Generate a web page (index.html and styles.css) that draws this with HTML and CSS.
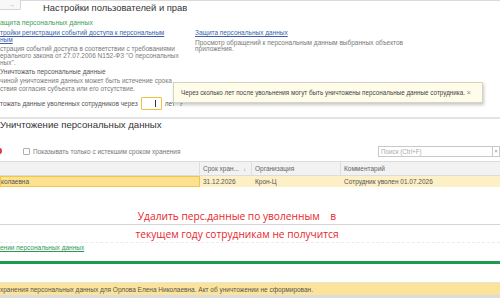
FILE: index.html
```html
<!DOCTYPE html>
<html lang="ru">
<head>
<meta charset="utf-8">
<link rel="stylesheet" href="styles.css">
</head>
<body>
<div class="page">
  <div class="topbar">
    <div class="navbtn"><span class="arrow">→</span></div>
    <div class="title">Настройки пользователей и прав</div>
  </div>

  <div class="group-title">ащита персональных данных</div>
  <div class="cols">
    <div class="col-left">
      <a class="link">тройки регистрации событий доступа к персональным<br>ным</a>
      <div class="desc">страция событий доступа в соответствии с требованиями<br>ерального закона от 27.07.2006 N152-ФЗ "О персональных<br>ных".</div>
    </div>
    <div class="col-right">
      <a class="link">Защита персональных данных</a>
      <div class="desc desc-right">Просмотр обращений к персональным данным выбранных объектов<br>приложения.</div>
    </div>
  </div>

  <div class="destroy">
    <div class="label-dark">Уничтожать персональные данные</div>
    <div class="desc desc-destroy">чиной уничтожения данных может быть истечение срока<br>ствия согласия субъекта или его отсутствие.</div>
    <div class="years-row">
      <span class="label-dark">тожать данные уволенных сотрудников через</span>
      <span class="years-input"><span class="caret"></span></span>
      <span class="label-dark">лет</span>
      <span class="help">?</span>
    </div>
  </div>

  <div class="tooltip">
    <span>Через сколько лет после увольнения могут быть уничтожены персональные данные сотрудника.</span>
    <span class="close">×</span>
  </div>

  <div class="separator"></div>

  <div class="section-title">Уничтожение персональных данных</div>

  <div class="toolbar">
    <span class="red-icon"></span>
    <span class="checkbox"></span>
    <span class="cb-label">Показывать только с истекшим сроком хранения</span>
    <span class="spacer"></span>
    <span class="search"><span class="search-text">Поиск (Ctrl+F)</span><span class="search-btn">×</span></span>
  </div>

  <div class="table">
    <div class="thead">
      <div class="c1"></div>
      <div class="c2"><span>Срок хран...</span><span class="sort">↓</span></div>
      <div class="c3">Организация</div>
      <div class="c4">Комментарий</div>
    </div>
    <div class="tbody">
      <div class="trow">
        <div class="c1 sel">колаевна</div>
        <div class="c2">31.12.2026</div>
        <div class="c3">Крон-Ц</div>
        <div class="c4">Сотрудник уволен 01.07.2026</div>
      </div>
    </div>
  </div>

  <div class="gap-row"></div>
  <div class="green-link-row"><a class="green-link">ении персональных данных</a></div>
  <div class="green-bar"></div>

  <div class="message">хранения персональных данных для Орлова Елена Николаевна. Акт об уничтожении не сформирован.</div>

  <div class="note">
    <div class="note-line">Удалить перс.данные по уволенным&nbsp;&nbsp;&nbsp; в</div>
    <div class="note-line">текущем году сотрудникам не получится</div>
  </div>
</div>
</body>
</html>
```

FILE: styles.css
```css
* { box-sizing: border-box; }
html, body { margin: 0; padding: 0; }
body {
  width: 500px;
  height: 300px;
  overflow: hidden;
  background: #fff;
  font-family: "Liberation Sans", Arial, sans-serif;
  color: #444;
}
.page {
  position: relative;
  width: 500px;
  height: 300px;
  border-top: 1px solid #dadada;
}
.topbar {
  display: flex;
  align-items: center;
  height: 13px;
}
.navbtn {
  width: 21px;
  height: 10px;
  align-self: flex-start;
  margin-top: -1px;
  border: 1px solid #d6d6d6;
  border-left: none;
  border-top: none;
  border-radius: 0 0 2px 0;
  background: #f8f8f8;
  display: flex;
  align-items: center;
  justify-content: flex-end;
  padding-right: 5px;
}
.arrow { font-size: 6px; color: #999; line-height: 1; }
.title {
  margin-left: 22px;
  font-size: 9.4px;
  color: #333;
}
.group-title {
  margin-top: 4px;
  font-size: 6.8px;
  color: #3d9e5a;
  line-height: 10px;
}
.cols {
  display: flex;
  margin-top: 1px;
}
.col-left { width: 195px; }
.col-right { flex: 1; }
.link {
  display: block;
  font-size: 6.5px;
  line-height: 7px;
  color: #3b5fae;
  text-decoration: underline;
}
.desc {
  font-size: 6.5px;
  line-height: 7px;
  color: #7a7a7a;
  margin-top: 1.5px;
}
.desc-right {
  margin-top: 3.5px;
  line-height: 6.5px;
}
.destroy { margin-top: 2.5px; }
.label-dark {
  font-size: 6.5px;
  line-height: 8px;
  color: #555;
}
.desc-destroy {
  line-height: 8px;
  margin-top: 1px;
}
.years-row {
  display: flex;
  align-items: center;
  margin-top: 3px;
  height: 15px;
}
.years-input {
  width: 21px;
  height: 13px;
  margin-left: 3px;
  margin-right: 3px;
  border: 1px solid #f0c040;
  border-radius: 1px;
  background: #fff;
  display: flex;
  align-items: center;
  justify-content: flex-end;
  padding-right: 5px;
}
.caret {
  width: 1px;
  height: 7px;
  background: #333;
}
.help {
  font-size: 6.5px;
  color: #3b8fd9;
  font-weight: bold;
  margin-left: 4px;
}
.tooltip {
  position: absolute;
  left: 173px;
  top: 81px;
  width: 310px;
  height: 21px;
  background: #fffde9;
  border: 1px solid #d6d3c0;
  box-shadow: 1px 2px 3px rgba(0,0,0,0.22);
  display: flex;
  align-items: center;
  justify-content: space-between;
  padding: 0 11px 0 7px;
  font-size: 6.3px;
  white-space: nowrap;
  color: #444;
}
.tooltip .close { font-size: 7.5px; color: #888; }
.separator {
  margin-top: 6px;
  height: 2px;
  background: #e4e4e4;
}
.section-title {
  font-size: 9.6px;
  color: #333;
  line-height: 11px;
}
.toolbar {
  display: flex;
  align-items: center;
  height: 12px;
  margin-top: 15px;
}
.red-icon {
  width: 4px;
  height: 6px;
  margin-left: -2px;
  border-radius: 50%;
  background: #e04040;
}
.checkbox {
  width: 7px;
  height: 7px;
  margin-left: 21px;
  border: 1px solid #b0b0b0;
  border-radius: 1px;
  background: #fff;
}
.cb-label {
  margin-left: 3px;
  font-size: 6.5px;
  color: #777;
}
.spacer { flex: 1; }
.search {
  width: 122px;
  height: 11px;
  border: 1px solid #c8c8c8;
  display: flex;
  align-items: center;
  justify-content: space-between;
  background: #fff;
}
.search-text { font-size: 6.3px; color: #aaa; padding-left: 2px; }
.search-btn {
  width: 7px;
  height: 9px;
  border-left: 1px solid #c8c8c8;
  font-size: 5px;
  color: #777;
  display: flex;
  align-items: center;
  justify-content: center;
}
.table {
  margin-top: 4px;
  border-bottom: 1px solid #d4d4d4;
}
.thead, .trow {
  display: flex;
  font-size: 6.5px;
}
.thead {
  height: 15px;
  background: #f2f2f2;
  border-top: 1px solid #dcdcdc;
  border-bottom: 1px solid #dcdcdc;
  color: #666;
}
.thead > div {
  display: flex;
  align-items: center;
  padding-left: 3px;
  border-right: 1px solid #dedede;
}
.c1 { width: 200px; }
.c2 { width: 52px; justify-content: space-between; }
.c3 { width: 89px; }
.c4 { flex: 1; }
.thead .c4 { border-right: none; }
.sort { padding-right: 5px; font-size: 5.5px; color: #888; }
.tbody { height: 48px; }
.trow {
  height: 11px;
  background: #fdf0c6;
  color: #555;
}
.trow > div {
  display: flex;
  align-items: center;
  padding-left: 3px;
}
.trow .sel {
  background: #fbe28e;
  border: 1px solid #f1c64a;
  padding-left: 0;
}
.gap-row { height: 17px; }
.green-link-row {
  height: 10px;
  display: flex;
  align-items: center;
  border-top: 1px dashed #ececec;
}
.green-link {
  font-size: 6.5px;
  color: #2e9a56;
  text-decoration: underline;
}
.green-bar {
  margin-top: 9px;
  height: 3px;
  background: #1e9b4a;
}
.message {
  margin-top: 18px;
  height: 16px;
  background: #fbe49a;
  border-top: 1px solid #e4e4e4;
  border-bottom: 3px solid #dcdcdc;
  font-size: 6.5px;
  color: #555;
  display: flex;
  align-items: center;
}
.note {
  position: absolute;
  left: 0;
  top: 206px;
  width: 474px;
  font-family: "Open Sans", "Liberation Sans", sans-serif;
  color: #e8262c;
  font-size: 10.2px;
  text-align: center;
}
.note-line {
  line-height: 18px;
  white-space: nowrap;
}
```
